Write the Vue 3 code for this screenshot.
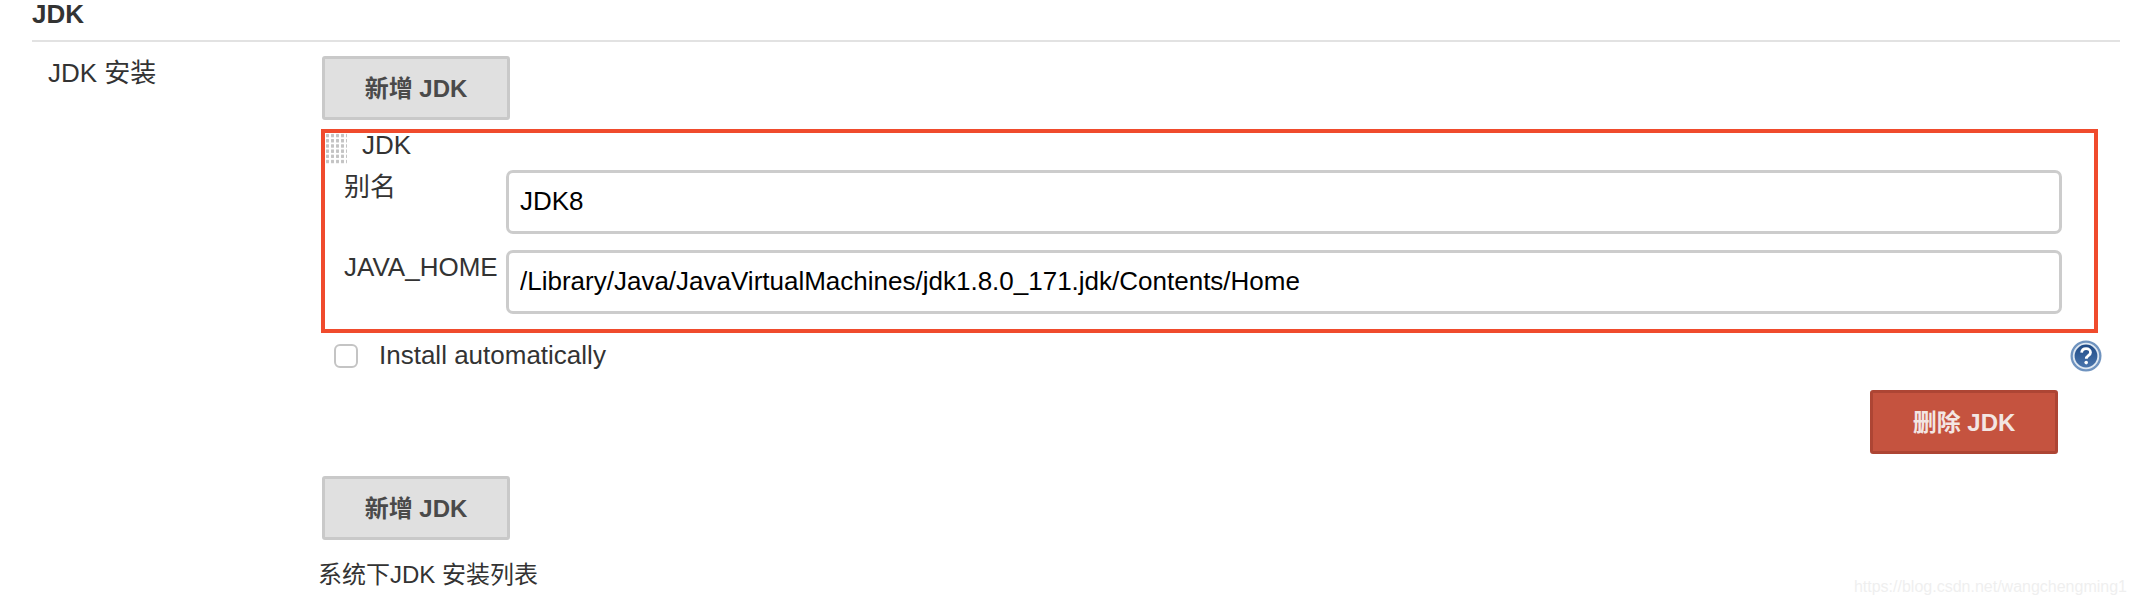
<script setup>
const fields = [
  { label: '别名', value: 'JDK8' },
  { label: 'JAVA_HOME', value: '/Library/Java/JavaVirtualMachines/jdk1.8.0_171.jdk/Contents/Home' }
]
</script>

<template>
  <div class="page">
    <div class="section-title">JDK</div>

    <div class="setting-row">
      <div class="setting-name">JDK 安装</div>

      <div class="setting-main">
        <button class="add-btn" type="button">新增 JDK</button>

        <div class="jdk-box">
          <div class="box-header">
            <span class="drag-handle"></span>
            <span class="box-title">JDK</span>
          </div>
          <div v-for="field in fields" :key="field.label" class="field-row">
            <label class="field-label">{{ field.label }}</label>
            <input class="field-input" type="text" :value="field.value" />
          </div>
        </div>

        <div class="auto-row">
          <label class="auto-label">
            <span class="fake-check"></span>
            <span class="auto-text">Install automatically</span>
          </label>
          <svg class="help-icon" width="32" height="32" viewBox="0 0 32 32">
            <defs>
              <linearGradient id="helpFill" x1="0" y1="0" x2="0" y2="1">
                <stop offset="0" stop-color="#1f4a86" />
                <stop offset="1" stop-color="#4b76ad" />
              </linearGradient>
            </defs>
            <circle cx="16" cy="16" r="15.5" fill="#6f93bf" />
            <circle cx="16" cy="16" r="13.2" fill="#dfe8f2" />
            <circle cx="16" cy="16" r="11.4" fill="url(#helpFill)" />
            <path d="M11.6 12.6c.3-2.6 2.2-3.9 4.5-3.9 2.5 0 4.4 1.5 4.4 3.7 0 3.2-4.2 3.3-4.2 6.3" fill="none" stroke="#fff" stroke-width="2.8" />
            <circle cx="16.2" cy="22.6" r="1.8" fill="#fff" />
          </svg>
        </div>

        <div class="delete-row">
          <button class="delete-btn" type="button">删除 JDK</button>
        </div>

        <button class="add-btn add-btn-bottom" type="button">新增 JDK</button>

        <div class="description">系统下JDK 安装列表</div>
      </div>
    </div>

    <div class="watermark">https://blog.csdn.net/wangchengming1</div>
  </div>
</template>

<style>
html, body {
  margin: 0;
  background: #fff;
}
</style>

<style scoped>
.page {
  position: relative;
  width: 2136px;
  height: 604px;
  overflow: hidden;
  background: #fff;
  color: #333;
  font-family: "Liberation Sans", "Noto Sans CJK SC", sans-serif;
  font-size: 26px;
}

.section-title {
  box-sizing: border-box;
  height: 42px;
  margin: 0 16px 0 32px;
  border-bottom: 2px solid #e2e2e2;
  font-weight: 700;
  line-height: 29px;
}

.setting-row {
  display: flex;
}

.setting-name {
  box-sizing: border-box;
  width: 322px;
  padding: 16px 0 0 48px;
  line-height: 30px;
}

.setting-main {
  padding-top: 14px;
}

.add-btn,
.delete-btn {
  display: block;
  box-sizing: border-box;
  width: 188px;
  height: 64px;
  padding: 0 0 4px;
  border: 3px solid #c9c9c9;
  border-radius: 3px;
  background: #e0e0e0;
  color: #4a4a4a;
  font-family: inherit;
  font-size: 24px;
  font-weight: 700;
}

.jdk-box {
  box-sizing: border-box;
  width: 1777px;
  margin: 9px 0 0 -1px;
  padding-bottom: 15px;
  border: 4px solid #f04b2d;
}

.box-header {
  display: flex;
  gap: 15px;
  height: 37px;
}

.drag-handle {
  width: 22px;
  height: 32px;
  background-image: radial-gradient(circle, #c4c4c4 1.6px, transparent 2px);
  background-size: 5px 5.2px;
}

.box-title {
  line-height: 24px;
}

.field-row {
  display: flex;
  margin-bottom: 16px;
  padding: 0 32px 0 19px;
}

.field-row:last-child {
  margin-bottom: 0;
}

.field-label {
  flex: none;
  width: 162px;
  padding-top: 2px;
  line-height: 30px;
}

.field-input {
  flex: 1;
  box-sizing: border-box;
  min-width: 0;
  height: 64px;
  padding: 0 11px 1px;
  border: 3px solid #cccccc;
  border-radius: 7px;
  outline: none;
  background: #fff;
  color: #000;
  font-family: inherit;
  font-size: 26px;
}

.auto-row {
  display: flex;
  align-items: center;
  justify-content: space-between;
  box-sizing: border-box;
  width: 1780px;
  height: 32px;
  margin-top: 7px;
  padding-left: 12px;
}

.auto-label {
  display: flex;
  align-items: center;
  gap: 21px;
}

.auto-text {
  margin-top: -2px;
}

.fake-check {
  box-sizing: border-box;
  width: 24px;
  height: 24px;
  border: 2px solid #c4c4c4;
  border-radius: 6px;
}

.delete-row {
  display: flex;
  justify-content: flex-end;
  width: 1736px;
  margin-top: 18px;
}

.delete-btn {
  border-color: #ad4534;
  background: #c5533f;
  color: #f3e6e3;
}

.add-btn-bottom {
  margin-top: 22px;
}

.description {
  margin: 21px 0 0 -4px;
  font-size: 24px;
  line-height: 28px;
}

.watermark {
  position: absolute;
  right: 9px;
  bottom: 6px;
  color: #efefef;
  font-size: 16px;
  line-height: 22px;
}
</style>
